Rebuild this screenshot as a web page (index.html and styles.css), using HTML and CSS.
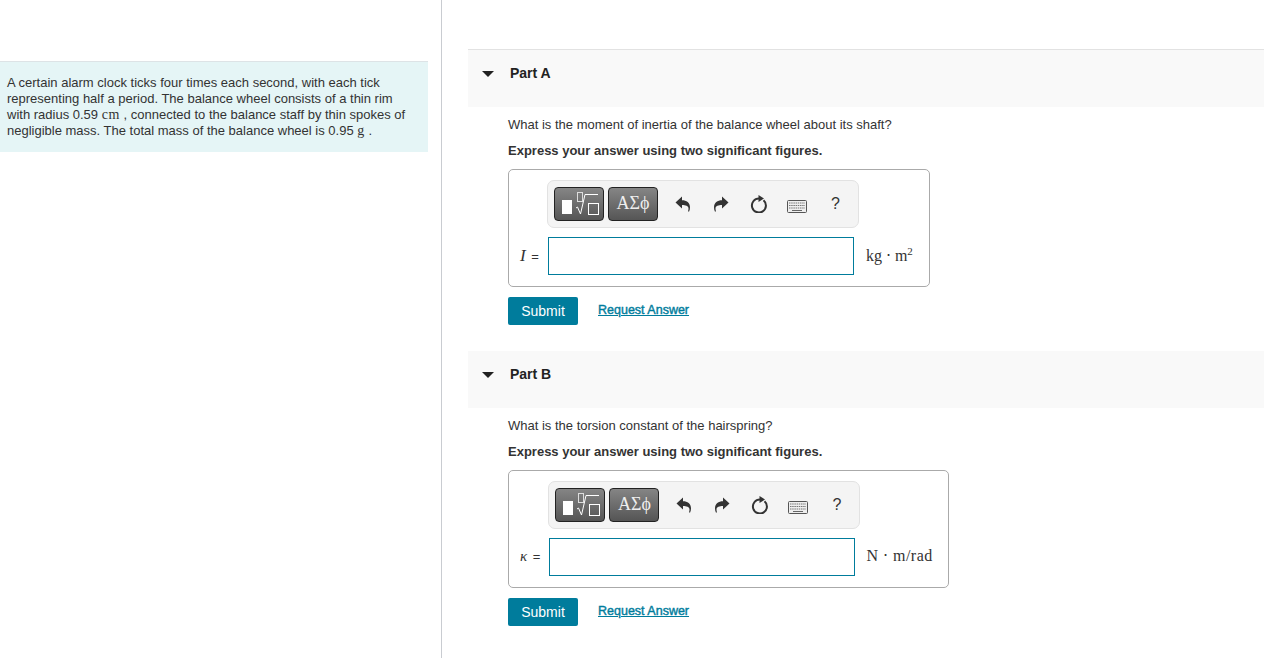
FILE: index.html
```html
<!DOCTYPE html>
<html lang="en">
<head>
    <meta charset="UTF-8">
    <title>Balance wheel problem</title>
    <link rel="stylesheet" href="styles.css">
</head>
<body>
    <svg class="defs" width="0" height="0">
        <symbol id="i-template" viewBox="0 0 48 32">
            <rect x="7" y="12" width="10" height="14" fill="#fff"/>
            <rect x="22.500" y="4.500" width="5" height="9" fill="none" stroke="#ddd"/>
            <path d="M21 20l1.500-1 3 7 4.500-19.500h13" fill="none" stroke="#fff"/>
            <rect x="33.500" y="15.500" width="10" height="11" fill="none" stroke="#fff"/>
        </symbol>
        <symbol id="i-undo" viewBox="0 0 16 16">
            <path d="M.500 6.500L7 .5v3.700c4.500 0 8 2.600 8 7 0 1.500-.3 2.800-.9 4.300h-1.100c.4-1.300.5-2.200.5-3 0-2.600-3-3.400-6.500-3.400v3.400z" fill="#333"/>
        </symbol>
        <symbol id="i-redo" viewBox="0 0 16 16">
            <path d="M15.500 6.500L9 .5v3.700c-4.500 0-8 2.600-8 7 0 1.500.3 2.800.9 4.300H3c-.4-1.300-.5-2.200-.5-3 0-2.600 3-3.400 6.500-3.400v3.400z" fill="#333"/>
        </symbol>
        <symbol id="i-reset" viewBox="0 0 18 18">
            <path d="M13.500 5.200A7 7 0 1 1 9 3.500" fill="none" stroke="#333" stroke-width="2"/>
            <path d="M8.500 0l5.500 3.500-5.500 3.500z" fill="#333"/>
        </symbol>
        <symbol id="i-keyboard" viewBox="0 0 20 13">
            <rect x=".5" y=".5" width="19" height="12" rx="1" fill="#eee" stroke="#555"/>
            <path d="M2 3h16M2 5.500h16M2 8h16" stroke="#777" stroke-dasharray="1.500 .7"/>
            <path d="M5 10.500h10" stroke="#666"/>
        </symbol>
    </svg>

    <div class="page">
        <aside class="intro-col">
            <p class="intro">A certain alarm clock ticks four times each second, with each tick representing half a period. The balance wheel consists of a thin rim with radius 0.59 <span class="math">cm</span> , connected to the balance staff by thin spokes of negligible mass. The total mass of the balance wheel is 0.95 <span class="math">g</span> .</p>
        </aside>

        <main class="parts">
            <section class="part part-a">
                <h2 class="part-head"><span class="caret"></span>Part A</h2>
                <div class="part-body">
                    <p class="question">What is the moment of inertia of the balance wheel about its shaft?</p>
                    <p class="hint">Express your answer using two significant figures.</p>
                    <div class="answer">
                        <div class="toolbar">
                            <span class="math-btn"><svg width="48" height="32"><use href="#i-template"/></svg></span>
                            <span class="math-btn greek">ΑΣϕ</span>
                            <svg class="tool t-undo" width="16" height="16"><use href="#i-undo"/></svg>
                            <svg class="tool t-redo" width="16" height="16"><use href="#i-redo"/></svg>
                            <svg class="tool t-reset" width="18" height="18"><use href="#i-reset"/></svg>
                            <svg class="tool t-keys" width="20" height="13"><use href="#i-keyboard"/></svg>
                            <span class="tool t-help">?</span>
                        </div>
                        <label class="var"><i class="var-i">I</i> =</label>
                        <input class="field" type="text">
                        <span class="unit">kg ⋅ m<sup>2</sup></span>
                    </div>
                    <div class="actions">
                        <button class="submit" type="button">Submit</button>
                        <a class="request" href="#">Request Answer</a>
                    </div>
                </div>
            </section>

            <section class="part part-b">
                <h2 class="part-head"><span class="caret"></span>Part B</h2>
                <div class="part-body">
                    <p class="question">What is the torsion constant of the hairspring?</p>
                    <p class="hint">Express your answer using two significant figures.</p>
                    <div class="answer">
                        <div class="toolbar">
                            <span class="math-btn"><svg width="48" height="32"><use href="#i-template"/></svg></span>
                            <span class="math-btn greek">ΑΣϕ</span>
                            <svg class="tool t-undo" width="16" height="16"><use href="#i-undo"/></svg>
                            <svg class="tool t-redo" width="16" height="16"><use href="#i-redo"/></svg>
                            <svg class="tool t-reset" width="18" height="18"><use href="#i-reset"/></svg>
                            <svg class="tool t-keys" width="20" height="13"><use href="#i-keyboard"/></svg>
                            <span class="tool t-help">?</span>
                        </div>
                        <label class="var var-low"><i class="var-k">κ</i> =</label>
                        <input class="field" type="text">
                        <span class="unit unit-wide">N ⋅ m/rad</span>
                    </div>
                    <div class="actions">
                        <button class="submit" type="button">Submit</button>
                        <a class="request" href="#">Request Answer</a>
                    </div>
                </div>
            </section>
        </main>
    </div>
</body>
</html>
```

FILE: styles.css
```css
html, body {margin: 0; height: 100%; overflow: hidden;}
body {font-family: "Liberation Sans", Arial, sans-serif; font-size: 13px; color: #333; background: #fff;}
.defs {position: absolute;}
.page {display: flex; height: 658px;}

.intro-col {width: 441px; flex: none; border-right: 1px solid #c9ccd1; padding-top: 61px;}
.intro {width: 408px; height: 64px; margin: 0; padding: 13px 13px 13px 7px; background: #e5f5f6; border-top: 1px solid #dde3e6; line-height: 16px;}
.math {font-family: "Liberation Serif", serif; font-size: 14px; letter-spacing: .6px; line-height: 0;}

.parts {flex: 1; padding: 49px 0 0 26px; min-width: 0;}
.part-b {margin-top: 26px;}
.part-head {display: flex; align-items: flex-start; height: 57px; margin: 0; padding-left: 14px; background: #f9f9f9; font-size: 14px; line-height: 47px; color: #222;}
.part-a .part-head {border-top: 1px solid #e2e2e2;}
.caret {width: 0; height: 0; margin: 21px 16px 0 0; border: 6px solid transparent; border-top: 6px solid #222; border-bottom: 0;}
.part-body {padding-left: 40px;}
.question {margin: 0; padding-top: 10px; line-height: 15px;}
.hint {margin: 11px 0 0; font-weight: bold; line-height: 15px;}

.answer {display: inline-grid; grid-template-columns: auto 306px auto; margin-top: 11px; padding: 10px 16px 11px 11px; border: 1px solid #aaa; border-radius: 5px; align-items: center;}
.toolbar {grid-column: 2 / 4; position: relative; display: flex; gap: 4px; box-sizing: border-box; width: 312px; height: 48px; margin: 0 0 9px -1px; padding: 6px; background: #f4f4f4; border: 1px solid #e2e2e2; border-radius: 7px;}
.math-btn {width: 50px; height: 34px; box-sizing: border-box; border: 1px solid #222; border-radius: 4px; background: linear-gradient(#858585, #555); display: block;}
.math-btn svg {display: block;}
.greek {font-family: "Liberation Serif", serif; font-size: 18px; line-height: 31px; text-align: center; color: #eee;}
.tool {position: absolute;}
.t-undo {left: 127px; top: 15px;}
.t-redo {left: 165px; top: 15px;}
.t-reset {left: 202px; top: 14px;}
.t-keys {left: 239px; top: 19px;}
.t-help {left: 283px; top: 14px; font-size: 16px; line-height: 18px;}

.var {justify-self: end; padding-right: 9px; font-size: 13px; word-spacing: 2px;}
.var-low {margin-bottom: 2px;}
.var-i {font-family: "Liberation Serif", serif; font-size: 17px;}
.var-k {font-family: "Liberation Serif", serif; font-size: 15px;}
.field {width: 306px; height: 38px; box-sizing: border-box; margin: 0; padding: 0 6px; border: 1px solid #007c9c; background: #fff; display: block;}
.unit {margin: 0 0 2px 12px; font-family: "Liberation Serif", serif; font-size: 16px; white-space: nowrap;}
.unit-wide {margin: 0 -1px 3px 11px; letter-spacing: .5px;}
.unit sup {font-size: 11px; line-height: 0;}

.actions {display: flex; align-items: flex-start; margin-top: 10px;}
.submit {width: 70px; height: 28px; padding: 0; border: none; border-radius: 2px; background: #007c9c; color: #fff; font: 14px "Liberation Sans", Arial, sans-serif;}
.request {margin: 6px 0 0 20px; color: #007c9c; font-size: 12.500px; -webkit-text-stroke: .4px #007c9c; line-height: 14px;}
```
